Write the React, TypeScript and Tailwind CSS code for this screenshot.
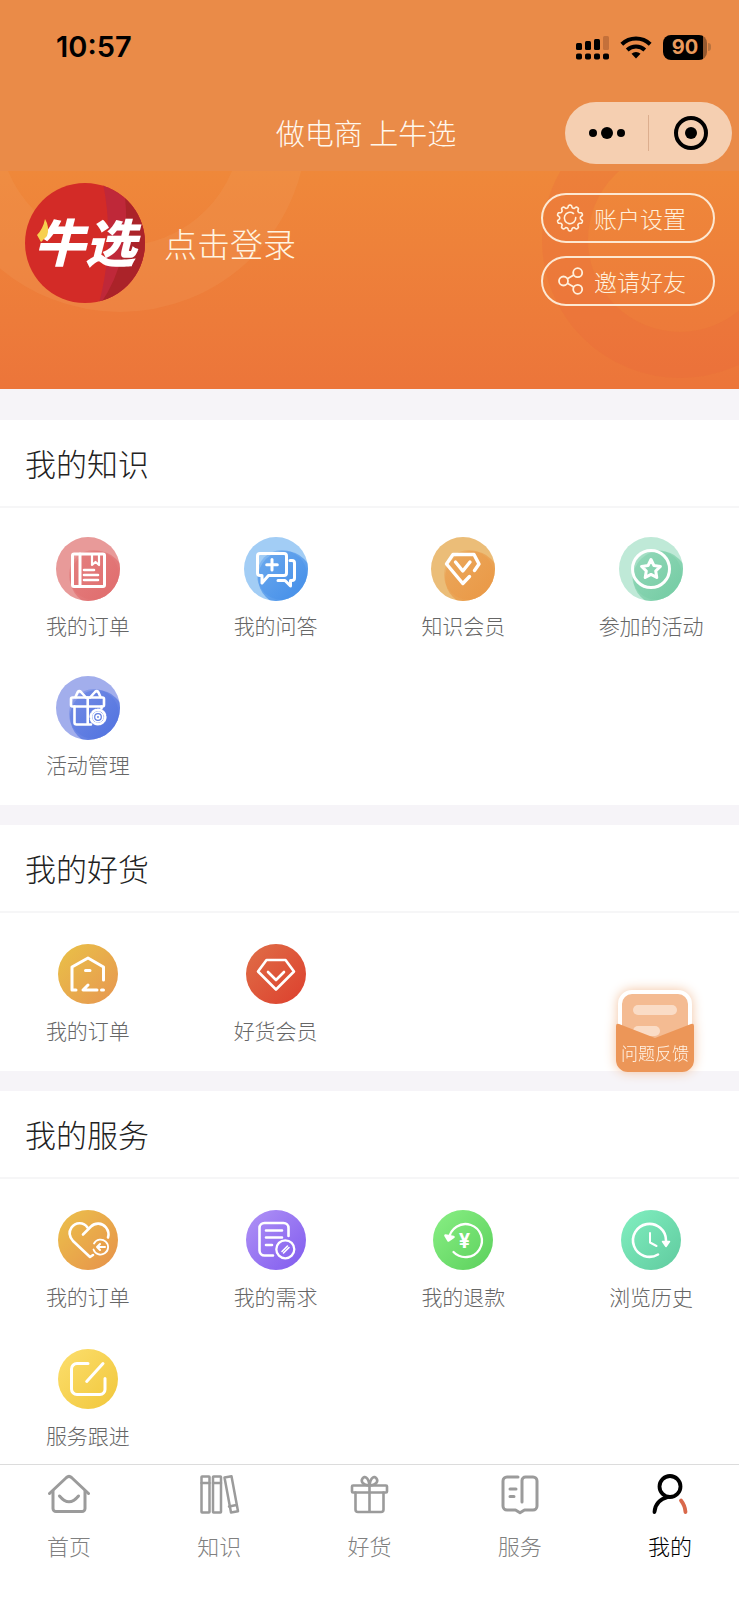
import type { ReactNode } from 'react';

interface MenuItem {
  label: string;
  icon: ReactNode;
}

interface MenuSectionProps {
  title: string;
  items: MenuItem[];
}

interface DiscProps {
  id: string;
  from: string;
  to: string;
  children: ReactNode;
}

// Pale disc with a darker one sliding out of its lower right edge
function LayeredDisc({ id, from, to, children }: DiscProps) {
  return (
    <svg viewBox="0 0 64 64" className="size-16" aria-hidden="true">
      <defs>
        <clipPath id={`${id}-clip`}>
          <circle cx="32" cy="32" r="32" />
        </clipPath>
        <linearGradient id={`${id}-fill`} x1="0" y1="0" x2="1" y2="1">
          <stop offset="0" stopColor={to} stopOpacity="0.35" />
          <stop offset="0.7" stopColor={to} />
        </linearGradient>
      </defs>
      <g clipPath={`url(#${id}-clip)`}>
        <rect width="64" height="64" fill={from} />
        <circle cx="38" cy="38" r="25" fill={to} opacity="0.35" />
        <circle cx="41" cy="41" r="27" fill={`url(#${id}-fill)`} opacity="0.8" />
      </g>
      <g fill="none" stroke="#fff" strokeWidth="3" strokeLinecap="round" strokeLinejoin="round">
        {children}
      </g>
    </svg>
  );
}

function GradientDisc({ id, from, to, children }: DiscProps) {
  return (
    <svg viewBox="-2 -2 64 64" className="size-16" aria-hidden="true">
      <defs>
        <linearGradient id={`${id}-fill`} x1="0.1" y1="0.1" x2="0.9" y2="0.9">
          <stop offset="0" stopColor={from} />
          <stop offset="1" stopColor={to} />
        </linearGradient>
      </defs>
      <circle cx="30" cy="30" r="30" fill={`url(#${id}-fill)`} />
      <g fill="none" stroke="#fff" strokeWidth="2.6" strokeLinecap="round" strokeLinejoin="round">
        {children}
      </g>
    </svg>
  );
}

const knowledgeItems: MenuItem[] = [
  {
    label: '我的订单',
    icon: (
      <LayeredDisc id="k-order" from="#e89a99" to="#e06a6b">
        <rect x="16.5" y="17" width="32" height="32.5" rx="1.5" />
        <path d="M24 17v32" />
        <path d="M36 18v10l3.5-3 3.5 3V18" strokeWidth="2.2" />
        <path d="M28 33h10M28 38h14M28 43h14" strokeWidth="2.6" />
      </LayeredDisc>
    ),
  },
  {
    label: '我的问答',
    icon: (
      <LayeredDisc id="k-qa" from="#a2cdf5" to="#3f8be8">
        <path d="M16 16.5h24a2.5 2.5 0 0 1 2.5 2.5v17a2.5 2.5 0 0 1-2.5 2.5H24.5L18 46v-7.500h-2a2.500 2.500 0 0 1-2.500-2.500V19a2.500 2.500 0 0 1 2.500-2.500z" />
        <path d="M28 22.500v10.500M22.700 27.700h10.600" />
        <path d="M46 23.500h2a2.500 2.500 0 0 1 2.500 2.500v15a2.500 2.500 0 0 1-2.500 2.500h-1.500V49l-5.500-5.500h-7" />
      </LayeredDisc>
    ),
  },
  {
    label: '知识会员',
    icon: (
      <LayeredDisc id="k-vip" from="#ebbd78" to="#ea9643">
        <path d="M38.500 39.500L31.800 46.500 15.500 27l6.500-9.500h21L48 27l-4.500 6.500" strokeWidth="3.400" />
        <path d="M24.500 25l7.300 9 7.200-9" strokeWidth="3.400" />
      </LayeredDisc>
    ),
  },
  {
    label: '参加的活动',
    icon: (
      <LayeredDisc id="k-event" from="#bfe9d7" to="#6fcaa0">
        <circle cx="32" cy="32" r="18.500" />
        <path d="M32 22.500l2.900 6 6.500.9-4.700 4.600 1.100 6.500-5.800-3.100-5.800 3.100 1.100-6.500-4.700-4.600 6.500-.9z" />
      </LayeredDisc>
    ),
  },
  {
    label: '活动管理',
    icon: (
      <LayeredDisc id="k-manage" from="#a2aeec" to="#4c6fdf">
        <rect x="15" y="21.500" width="33" height="9" rx="1.500" strokeWidth="2.600" />
        <path d="M18.500 30.500v16a2 2 0 0 0 2 2H35M45.500 30.500v2M31.700 21.500v27" strokeWidth="2.600" />
        <path d="M19.500 21l2-4.500q1.500-2.500 3.500-.5l5 5.500M44.500 21l-2-4.500q-1.500-2.500-3.500-.5l-5 5.500" strokeWidth="2.600" />
        <circle cx="42" cy="41" r="7.200" strokeDasharray="3.600 2" strokeWidth="2.800" />
        <circle cx="42" cy="41" r="4.800" strokeWidth="1.800" />
        <circle cx="42" cy="41" r="1.800" strokeWidth="1.800" />
      </LayeredDisc>
    ),
  },
];

const goodsItems: MenuItem[] = [
  {
    label: '我的订单',
    icon: (
      <GradientDisc id="g-order" from="#e9bd48" to="#e79a50">
        <path d="M18 46h-4V23l16-9 15.500 9v13" strokeWidth="3" />
        <path d="M27.500 26.500h4.500M30 41l-5 5h14M43.500 46h2" strokeWidth="3" />
      </GradientDisc>
    ),
  },
  {
    label: '好货会员',
    icon: (
      <GradientDisc id="g-vip" from="#df6a45" to="#dd4430">
        <path d="M20.500 16h19L48 27.500 30 45.500 12 27.500z" />
        <path d="M22 28l8 8 8-8" />
      </GradientDisc>
    ),
  },
];

const serviceItems: MenuItem[] = [
  {
    label: '我的订单',
    icon: (
      <GradientDisc id="s-order" from="#ebbc4b" to="#e7964b">
        <path d="M25 24.500l8-8c4-4 11-4 15 1 3 4 3 7 2 10" />
        <path d="M29.500 17.500c-4-6-12-5.500-16 0-3 4.500-2 9.500 1.500 13.500L32 47l3-2" />
        <path d="M36 33.500a7.500 7.500 0 1 1-.5 6" strokeWidth="1.800" />
        <path d="M47 37H39M42 34l-3 3 3 3" strokeWidth="2" />
      </GradientDisc>
    ),
  },
  {
    label: '我的需求',
    icon: (
      <GradientDisc id="s-need" from="#ab8df5" to="#8560ef">
        <path d="M42.500 26V18a5 5 0 0 0-5-5h-19a5 5 0 0 0-5 5v22.500a5 5 0 0 0 5 5H27" />
        <path d="M20 20.500h16M20 27.500h16M20 35h6" />
        <circle cx="39.300" cy="39.300" r="9" strokeWidth="2.300" />
        <path d="M36 41.500l5.500-5.500M37.500 43l5.500-5.500" strokeWidth="1.600" />
      </GradientDisc>
    ),
  },
  {
    label: '我的退款',
    icon: (
      <GradientDisc id="s-refund" from="#84ec80" to="#60d360">
        <path d="M16 29a16.500 16.500 0 1 1 4.500 13" strokeWidth="2.300" />
        <path d="M12.500 25.500l3 5 5-3.500z" fill="#fff" />
        <text
          x="31.500"
          y="38"
          textAnchor="middle"
          fill="#fff"
          stroke="none"
          className="font-['Inter',sans-serif] text-[20px] font-bold"
        >
          ¥
        </text>
      </GradientDisc>
    ),
  },
  {
    label: '浏览历史',
    icon: (
      <GradientDisc id="s-history" from="#7eecbd" to="#63cea2">
        <path d="M45 30.500a16.500 16.500 0 1 0-8 14" />
        <path d="M41.500 31.500h7l-3.500 5z" fill="#fff" strokeWidth="1.500" />
        <path d="M29 23v9.500l6.500 3.500" strokeWidth="2" />
      </GradientDisc>
    ),
  },
  {
    label: '服务跟进',
    icon: (
      <GradientDisc id="s-follow" from="#fbdc68" to="#f2c940">
        <path d="M30 14.500H19a5.500 5.500 0 0 0-5.500 5.500v20a5.500 5.500 0 0 0 5.500 5.500h23a5 5 0 0 0 5-5V29.500M28.700 32.500L45 14.500" strokeWidth="3" />
      </GradientDisc>
    ),
  },
];

const tabs = [
  {
    label: '首页',
    icon: (
      <>
        <path d="M1.500 20.500L18.500 4.500q2.500-2.200 5 0L40.500 20.500" />
        <path d="M5 18v17.500a3 3 0 0 0 3 3h26a3 3 0 0 0 3-3V18" />
        <path d="M11.500 23q9.500 11.500 19 0" />
      </>
    ),
  },
  {
    label: '知识',
    icon: (
      <g strokeWidth="2.500">
        <rect x="3.500" y="3.500" width="8" height="36" rx="0.500" />
        <path d="M3.500 10h8M15 10h8M31 33.500l7.500-1.500" />
        <rect x="15" y="3.500" width="8" height="36" rx="0.500" />
        <path d="M26.500 4.500l7-1.200 6.500 34.900-7 1.300z" />
      </g>
    ),
  },
  {
    label: '好货',
    icon: (
      <g strokeWidth="2.600">
        <rect x="4" y="12.500" width="35" height="7" rx="1" />
        <path d="M7.500 19.500v17a2.500 2.500 0 0 0 2.500 2.500h23a2.500 2.500 0 0 0 2.500-2.500v-17M21.500 12.500v26.500" />
        <path d="M21.500 12.500c-7-.5-9-4-7-7s6-1.500 7 7zM21.500 12.500c7-.5 9-4 7-7s-6-1.500-7 7z" />
      </g>
    ),
  },
  {
    label: '服务',
    icon: (
      <>
        <path d="M19 4H8a4 4 0 0 0-4 4v25a4 4 0 0 0 4 4h8.500l4.500 2.800 4.500-2.800H34a4 4 0 0 0 4-4V8a4 4 0 0 0-4-4h-7.500a3.500 3.500 0 0 0-3.500 3.500v21.500" />
        <path d="M11 16h6M11 23.500h4" />
      </>
    ),
  },
  {
    label: '我的',
    active: true,
    icon: (
      <g strokeWidth="3.800">
        <circle cx="21" cy="13.500" r="10.500" />
        <path d="M19 24C11 26 6 31 5.500 39" />
        <path d="M32 27.500q4 5 4.500 11.500" stroke="#d9694b" />
      </g>
    ),
  },
];

const gearPath =
  Array.from({ length: 120 }, (_, i) => {
    const angle = (i / 120) * Math.PI * 2;
    const radius = 11.600 + 1.300 * Math.tanh(2.200 * Math.cos(angle * 10));
    const x = 14 + radius * Math.sin(angle);
    const y = 14 - radius * Math.cos(angle);
    return `${i === 0 ? 'M' : 'L'}${x.toFixed(2)} ${y.toFixed(2)}`;
  }).join('') + 'Z';

function StatusBar() {
  return (
    <div className="flex h-[94px] items-center justify-between pl-14 pr-7">
      <span className="font-['Inter',sans-serif] text-[29px] font-semibold text-black">10:57</span>
      <div className="flex items-center gap-[11px]">
        <svg viewBox="0 0 33 25" className="h-[25px] w-[33px]" aria-hidden="true">
          <rect x="0" y="8" width="6" height="7" rx="1.500" />
          <rect x="9" y="6" width="6" height="9" rx="1.500" />
          <rect x="18" y="4" width="6" height="11" rx="1.500" />
          <rect x="27" y="1" width="6" height="14" rx="1.500" fill="#c4703a" />
          <rect x="0" y="18.500" width="6" height="6" rx="1.800" />
          <rect x="9" y="18.500" width="6" height="6" rx="1.800" />
          <rect x="18" y="18.500" width="6" height="6" rx="1.800" />
          <rect x="27" y="18.500" width="6" height="6" rx="1.800" />
        </svg>
        <svg viewBox="0 0 32 24" className="h-6 w-8" fill="none" stroke="#000" strokeWidth="4" aria-hidden="true">
          <path d="M1.800 9.300a20.500 20.500 0 0 1 28.400 0" />
          <path d="M7.200 15a13 13 0 0 1 17.600 0" />
          <path d="M11.500 18.800a6.500 6.500 0 0 1 9 0L16 23.500z" fill="#000" stroke="none" />
        </svg>
        <div className="flex items-center gap-px">
          <div className="flex h-[25px] w-11 items-center justify-center rounded-lg bg-linear-to-r from-black from-90% to-[#93582f] to-90% font-['Inter',sans-serif] text-xl font-bold text-[#ea9a5c]">
            90
          </div>
          <div className="h-2 w-[3px] rounded-r-full bg-[#b8733f]" />
        </div>
      </div>
    </div>
  );
}

function TitleBar() {
  return (
    <div className="grid h-[77px] grid-cols-[1fr_auto_1fr] items-center pr-[7px]">
      <h1 className="col-start-2 text-[29px] leading-none text-[#fff8ee]">做电商 上牛选</h1>
      <div className="flex h-[62px] w-[167px] items-center justify-self-end rounded-full bg-[#f5cfb1]">
        <button type="button" aria-label="更多" className="flex flex-1 items-center justify-center gap-1">
          <span className="size-2 rounded-full bg-black" />
          <span className="size-3 rounded-full bg-black" />
          <span className="size-2 rounded-full bg-black" />
        </button>
        <span className="h-9 w-px bg-[#dcae8e]" />
        <button type="button" aria-label="关闭" className="flex flex-1 items-center justify-center">
          <span className="flex size-[34px] items-center justify-center rounded-full border-4 border-black">
            <span className="size-3 rounded-full bg-black" />
          </span>
        </button>
      </div>
    </div>
  );
}

function Logo() {
  return (
    <svg viewBox="0 0 120 120" className="size-[120px] shrink-0" aria-hidden="true">
      <defs>
        <clipPath id="logo-clip">
          <circle cx="60" cy="60" r="60" />
        </clipPath>
      </defs>
      <g clipPath="url(#logo-clip)">
        <rect width="120" height="120" fill="#d32b27" />
        <path d="M78 0h42v120H74q16-60 4-120z" fill="#bf2839" />
        <path d="M98 0h22v120H76q34-50 22-120z" fill="#ab2329" />
      </g>
      <text x="9" y="79" fill="#fff" className="text-[51px] font-black italic">
        牛选
      </text>
      <path d="M20 36q5 8 2 17l-6 6-4-7q6-6 8-16z" fill="#f7d04f" />
    </svg>
  );
}

function ProfilePanel() {
  return (
    <div className="relative h-[218px] overflow-hidden bg-linear-to-b from-[#ef883a] to-[#ec753a]">
      <svg
        viewBox="0 0 739 218"
        preserveAspectRatio="xMidYMid slice"
        className="absolute inset-0 size-full"
        fill="none"
        aria-hidden="true"
      >
        <circle cx="120" cy="-46" r="154" stroke="#f0a060" strokeOpacity="0.22" strokeWidth="66" />
        <circle cx="680" cy="69" r="115" stroke="#e6643a" strokeOpacity="0.22" strokeWidth="46" />
      </svg>
      <div className="relative flex items-start justify-between pl-[25px] pr-6 pt-3">
        <a href="#login" className="flex items-center gap-[19px] text-[33px] leading-none text-[#fff4e0]">
          <Logo />
          点击登录
        </a>
        <div className="mt-[10px] flex flex-col gap-[13px] text-[23px] text-[#fff0dc]">
          <button type="button" className="flex h-[50px] w-[174px] items-center gap-[10px] rounded-full border-2 border-[#fde8d2] pl-[13px]">
            <svg viewBox="0 0 28 28" className="size-7" fill="none" stroke="currentColor" strokeWidth="1.600" strokeLinecap="round" aria-hidden="true">
              <path d={gearPath} strokeLinejoin="round" />
              <path d="M17.500 9.500a5.700 5.700 0 1 0 2.200 4" />
            </svg>
            账户设置
          </button>
          <button type="button" className="flex h-[50px] w-[174px] items-center gap-[10px] rounded-full border-2 border-[#fde8d2] pl-[13px]">
            <svg viewBox="0 0 28 28" className="size-7" fill="none" stroke="currentColor" strokeWidth="1.800" aria-hidden="true">
              <circle cx="21.700" cy="5.700" r="4.500" />
              <circle cx="7.500" cy="14" r="4.500" />
              <circle cx="21.700" cy="22.300" r="4.500" />
              <path d="M11.400 11.700l6.400-3.700M11.400 16.300l6.400 3.700" />
            </svg>
            邀请好友
          </button>
        </div>
      </div>
    </div>
  );
}

function MenuSection({ title, items }: MenuSectionProps) {
  return (
    <section className="overflow-hidden bg-white">
      <h2 className="flex h-[88px] items-center border-b-2 border-[#f6f6f7] px-[25px] text-[31px] text-[#222]">{title}</h2>
      <div className="-mx-1.5 grid grid-cols-4 gap-y-[35px] pb-[25px] pt-[29px]">
        {items.map((item) => (
          <a key={item.label} href="#menu" className="flex flex-col items-center gap-2">
            {item.icon}
            <span className="text-[21px] leading-8 text-[#666]">{item.label}</span>
          </a>
        ))}
      </div>
    </section>
  );
}

function FeedbackButton() {
  return (
    <button type="button" className="fixed bottom-[528px] right-[45px] h-[82px] w-[78px]">
      <svg viewBox="0 0 78 82" className="absolute inset-0 size-full overflow-visible drop-shadow-[0_0_6px_#f3c3a0]" aria-hidden="true">
        <rect x="4" y="2" width="70" height="60" rx="12" fill="#f4bb92" stroke="#fff" strokeWidth="4" />
        <rect x="17" y="15" width="44" height="10" rx="5" fill="#fadcc6" />
        <rect x="17" y="36" width="27" height="10" rx="5" fill="#fadcc6" />
        <path d="M0 36q0-3 3-2l36 14 36-14q3-1 3 2v34a12 12 0 0 1-12 12H12A12 12 0 0 1 0 70z" fill="#ec9658" />
      </svg>
      <span className="relative mt-11 block text-center text-[17px] leading-5 text-[#fff4e8]">问题反馈</span>
    </button>
  );
}

function TabBar() {
  return (
    <nav className="h-[136px] shrink-0 overflow-hidden border-t border-[#dcdcdc] bg-white">
      <div className="-mx-1.5 grid grid-cols-5 pt-2">
        {tabs.map((tab) => (
          <a
            key={tab.label}
            href="#tab"
            aria-current={tab.active ? 'page' : undefined}
            className={`flex flex-col items-center gap-[14px] ${tab.active ? 'text-black' : 'text-[#808080]'}`}
          >
            <svg
              viewBox="0 0 42 42"
              className={`size-[42px] ${tab.active ? 'stroke-black' : 'stroke-[#9b9b9b]'}`}
              fill="none"
              strokeWidth="3"
              strokeLinecap="round"
              strokeLinejoin="round"
              aria-hidden="true"
            >
              {tab.icon}
            </svg>
            <span className="text-[22px] leading-8">{tab.label}</span>
          </a>
        ))}
      </div>
    </nav>
  );
}

export default function App() {
  return (
    <div className="flex h-screen flex-col bg-[#f6f4f8] font-['Noto_Sans_CJK_SC',sans-serif] font-light">
      <main className="flex-1 overflow-y-auto [scrollbar-width:none]">
        <header className="mb-[31px] bg-[#ea8b48]">
          <StatusBar />
          <TitleBar />
          <ProfilePanel />
        </header>
        <div className="flex flex-col gap-5">
          <MenuSection title="我的知识" items={knowledgeItems} />
          <MenuSection title="我的好货" items={goodsItems} />
          <MenuSection title="我的服务" items={serviceItems} />
        </div>
      </main>
      <FeedbackButton />
      <TabBar />
    </div>
  );
}
